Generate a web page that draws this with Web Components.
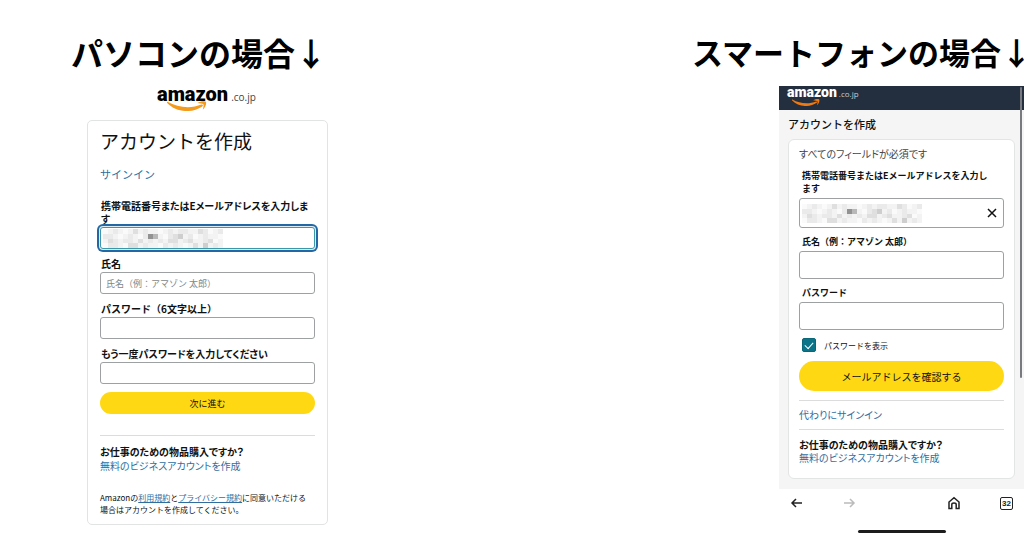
<!DOCTYPE html>
<html lang="ja">
<head>
<meta charset="utf-8">
<title>アカウントを作成</title>
<style>
    body {
        margin: 0;
        background: #fff;
        color: #0f1111;
        font-family: "Noto Sans CJK JP", "Noto Sans", sans-serif;
        font-size: 10px;
        font-feature-settings: "palt";
        overflow: hidden;
    }
</style>
</head>
<body>
<compare-page>
    <device-column slot="pc" heading="パソコンの場合↓"><desktop-signup></desktop-signup></device-column>
    <device-column slot="phone" heading="スマートフォンの場合↓" long><phone-signup></phone-signup></device-column>
</compare-page>

<script>
/**
 * Attach an open shadow root holding the given markup.
 * @param {HTMLElement} el
 * @param {String} html
 */
const render = (el, html) => {
    const template = document.createElement('template');
    template.innerHTML = html;
    el.attachShadow({ mode: 'open' }).appendChild(template.content.cloneNode(true));
};

// Styles shared by both forms.
const formStyles = `
    * { box-sizing: border-box; }
    h2, p { margin: 0; }
    a { color: #2f6f9f; text-decoration: none; }
    hr { height: 1px; border: 0; background: #dcdcdc; margin: 0; }
    button {
        display: block;
        width: 100%;
        border: 0;
        padding: 0;
        border-radius: 15px;
        background: #ffd814;
        color: #0f1111;
        font: inherit;
        font-feature-settings: normal;
    }
`;

class ComparePage extends HTMLElement {
    constructor () {
        super();
        render(this, `
<style>
    :host { display: flex; justify-content: space-between; min-height: 100vh; overflow: hidden; }
    .pc { flex: none; padding-left: 71px; }
    .phone { flex: none; display: flex; }
</style>
<section class="pc"><slot name="pc"></slot></section>
<section class="phone"><slot name="phone"></slot></section>
`);
    }
}

class DeviceColumn extends HTMLElement {
    constructor () {
        super();
        render(this, `
<style>
    :host { display: flex; flex-direction: column; width: 332px; }
    h1 {
        margin: 0;
        padding-top: 30px;
        height: 55px;
        font-size: 32px;
        line-height: 44px;
        font-weight: 700;
        color: #000;
        white-space: nowrap;
        font-feature-settings: normal;
    }
    :host([long]) h1 { font-size: 31px; }
</style>
<h1></h1>
<slot></slot>
`);
        this.shadowRoot.querySelector('h1').textContent = this.getAttribute('heading');
    }
}

class StoreLogo extends HTMLElement {
    constructor () {
        super();
        render(this, `
<style>
    :host {
        display: grid;
        grid-template-columns: max-content max-content;
        justify-content: start;
        align-content: start;
        column-gap: 3px;
        align-items: baseline;
        color: #000;
        font-family: Roboto, sans-serif;
    }
    b { font-size: var(--logo-size, 20px); line-height: var(--logo-line, 18px); font-weight: 900; }
    span { font-family: "Open Sans", sans-serif; font-size: var(--domain-size, 10px); line-height: 12px; color: var(--domain-color, #444); }
    svg { display: block; width: var(--smile-width, 40px); height: auto; margin: var(--smile-margin, -2px 0 0 10px); color: var(--smile, #f29b1d); }
</style>
<b>amazon</b><span>.co.jp</span>
<svg viewBox="0 0 40 10" aria-hidden="true">
    <path d="M0.5 0.800 C11 6.800 24 7.800 34.5 3.600 C35.8 3.200 36.5 4.500 35.3 5.400 C25 12.500 9 11.500 0.200 2 C-0.200 1.300 0 0.600 0.500 0.800Z" fill="currentColor"/>
    <path d="M30.500 2 C33.500 -0.200 37.800 -0.200 38.800 0.800 C39.900 2 38.300 7 35.800 8.800 C36.300 6.500 37 4 36.200 3.100 C35.500 2.400 33 2.300 30.500 2Z" fill="currentColor"/>
</svg>
`);
    }
}

/**
 * Pixelated strip laid over a field to hide its value.
 */
class MosaicStrip extends HTMLElement {
    constructor () {
        super();
        const rows = [
            '012101312110121221132012',
            '221012102651023412012110',
            '132122131212133123112301',
            '022103312110212101314121'
        ];
        const shades = ['#fafafa', '#f3f3f3', '#eaeaea', '#dfdfdf', '#cecece', '#b8b8b8', '#929292'];
        let rects = '';
        rows.forEach((row, y) => {
            [...row].forEach((level, x) => {
                rects += `<rect x="${x * 5}" y="${y * 5}" width="5" height="5" fill="${shades[level]}"/>`;
            });
        });
        render(this, `
<style>
    :host { display: block; width: 120px; height: 19px; pointer-events: none; }
    svg { display: block; width: 100%; height: 100%; }
</style>
<svg viewBox="0 0 120 20" preserveAspectRatio="none" shape-rendering="crispEdges" aria-hidden="true">${rects}</svg>
`);
    }
}

/**
 * Label and input pair.
 * The slot takes whatever lies over the input.
 * Add the tight attribute to set the label with proportional kana.
 */
class TextField extends HTMLElement {
    constructor () {
        super();
        render(this, `
<style>
    :host { display: block; margin-top: var(--field-space, 8px); font-feature-settings: normal; }
    :host([tight]) { font-feature-settings: "palt"; }
    label { display: block; padding-left: var(--label-indent, 1px); font-size: var(--label-size, 10px); line-height: 13px; font-weight: 700; white-space: pre-line; }
    .box { position: relative; margin-top: var(--label-gap, 2px); }
    input {
        display: block;
        box-sizing: border-box;
        width: 100%;
        height: var(--field-height, 22px);
        padding: 0 5px;
        border: 1px solid #9da1a1;
        border-radius: 3px;
        background: #fff;
        color: #0f1111;
        font: inherit;
        font-size: 9px;
        outline: 0;
    }
    input::placeholder { color: #838888; opacity: 1; }
    :host([active]) input { border-color: #3c97a8; box-shadow: 0 0 0 1px #dcebf2, 0 0 0 3px #2368a5; }
    .over {
        position: absolute;
        inset: 0;
        display: flex;
        align-items: center;
        justify-content: space-between;
        padding: 0 7px 0 3px;
    }
    .over:not(.filled) { display: none; }
</style>
<label for="field"></label>
<div class="box">
    <input id="field">
    <div class="over"><slot></slot></div>
</div>
`);
        const input = this.shadowRoot.querySelector('input');
        this.shadowRoot.querySelector('label').textContent = this.getAttribute('label').replace('|', '\n');
        input.type = this.getAttribute('type') || 'text';
        input.placeholder = this.getAttribute('placeholder') || '';
        this.shadowRoot.querySelector('.over').classList.toggle('filled', this.childElementCount > 0);
    }
}

class DesktopSignup extends HTMLElement {
    constructor () {
        super();
        render(this, `
<style>
    ${formStyles}
    :host { display: block; width: 241px; margin-left: 16px; }
    store-logo { margin-left: 70px; height: 35px; }
    .card { padding: 7px 12px 8px; border: 1px solid #e2e4e4; border-radius: 5px; }
    h2 { font-size: 19px; line-height: 26px; font-weight: 400; white-space: nowrap; font-feature-settings: normal; }
    .signin { display: block; margin: 12px 0 17px; font-size: 11px; line-height: 16px; font-feature-settings: normal; }
    button { margin-top: 8px; height: 22px; font-size: 9px; }
    hr { margin: 21px 0 9px; }
    .business { line-height: 14px; }
    .business b, .business a { display: block; }
    .terms { margin-top: 19px; font-size: 8px; line-height: 12px; white-space: nowrap; font-feature-settings: normal; }
    .terms a { text-decoration: underline; }
</style>
<store-logo></store-logo>
<form class="card">
    <h2>アカウントを作成</h2>
    <a class="signin" href="#signin">サインイン</a>
    <text-field active tight label="携帯電話番号またはEメールアドレスを入力しま|す"><mosaic-strip></mosaic-strip></text-field>
    <text-field label="氏名" placeholder="氏名（例：アマゾン 太郎）"></text-field>
    <text-field label="パスワード（6文字以上）" type="password"></text-field>
    <text-field tight label="もう一度パスワードを入力してください" type="password"></text-field>
    <button type="button">次に進む</button>
    <hr>
    <p class="business"><b>お仕事のための物品購入ですか？</b><a href="#business">無料のビジネスアカウントを作成</a></p>
    <p class="terms">Amazonの<a href="#terms">利用規約</a>と<a href="#privacy">プライバシー規約</a>に同意いただける<br>場合はアカウントを作成してください。</p>
</form>
`);
    }
}

class BrowserBar extends HTMLElement {
    constructor () {
        super();
        render(this, `
<style>
    :host { display: block; background: #fff; }
    nav { display: flex; align-items: center; height: 28px; padding: 0 11px; }
    button { width: 14px; height: 14px; padding: 0; border: 0; background: none; color: #222; }
    button:nth-child(2) { margin: 0 auto 0 38px; color: #bbb; }
    button:nth-child(3) { margin-right: 39px; }
    .tabs { border: 1px solid #222; border-radius: 2px; width: 13px; height: 13px; font: 700 8px/11px "Liberation Sans", sans-serif; }
    svg { display: block; width: 100%; height: 100%; fill: none; stroke: currentColor; stroke-width: 1.5; }
    .home-line { width: 88px; height: 3px; margin: 13px auto 0; border-radius: 2px; background: #1d1d1d; }
</style>
<nav>
    <button type="button" aria-label="戻る"><svg viewBox="0 0 14 14"><path d="M12 7H2.500M6 3L2 7l4 4"/></svg></button>
    <button type="button" aria-label="進む"><svg viewBox="0 0 14 14"><path d="M2 7h9.500M8 3l4 4-4 4"/></svg></button>
    <button type="button" aria-label="ホーム"><svg viewBox="0 0 14 14"><path d="M2 12.500V6L7 1.700 12 6v6.500H9.200V8.500Q9.200 7 7 7T4.800 8.500v4Z"/></svg></button>
    <button type="button" class="tabs">32</button>
</nav>
<div class="home-line"></div>
`);
    }
}

class PhoneSignup extends HTMLElement {
    constructor () {
        super();
        render(this, `
<style>
    ${formStyles}
    :host { position: relative; display: block; width: 245px; margin: 1px 0 0 auto; }
    header { height: 24px; padding-left: 8px; background: #232f3e; }
    store-logo {
        --logo-size: 14px;
        --logo-line: 12px;
        --domain-size: 8px;
        --domain-color: #c8ccd1;
        --smile: #ef7a13;
        --smile-width: 28px;
        --smile-margin: -1px 0 0 5px;
        column-gap: 2px;
        color: #fff;
    }
    .page { padding: 6px 9px 10px; background: #f5f5f5; }
    h2 { font-size: 11px; line-height: 16px; font-weight: 500; font-feature-settings: normal; }
    .card { margin-top: 7px; padding: 7px 10px 14px; border: 1px solid #e3e5e5; border-radius: 6px; background: #fff; }
    .note { line-height: 14px; color: #444; }
    text-field { --field-space: 7px; --label-gap: 3px; --label-indent: 3px; --label-size: 9px; --field-height: 28px; }
    text-field.first { --field-space: 8px; --field-height: 30px; }
    .clear { width: 10px; height: 10px; background: none; }
    .clear svg { display: block; stroke: #111; stroke-width: 1.5; }
    .show { display: flex; align-items: center; gap: 8px; height: 14px; margin: 8px 0 9px 3px; font-size: 8px; font-feature-settings: normal; }
    .show input {
        appearance: none;
        width: 14px;
        height: 14px;
        margin: 0;
        border: 1px solid #0b6678;
        border-radius: 2px;
        background: #0c7488;
    }
    .show input::before { content: ""; display: block; width: 7px; height: 4px; margin: 3px auto 0; border: solid transparent; border-width: 0 0 1px 1px; transform: rotate(-48deg); }
    .show input:checked::before { border-color: #fff; }
    .confirm { height: 30px; margin-bottom: 9px; }
    .signin { display: block; margin: 7px 0; line-height: 14px; }
    .business { margin-top: 8px; line-height: 13px; }
    .business b, .business a { display: block; }
    .scroll { position: absolute; top: 1px; right: 2px; width: 2px; height: 291px; border-radius: 1px; background: #777b80; }
</style>
<header><store-logo></store-logo></header>
<div class="page">
    <h2>アカウントを作成</h2>
    <form class="card">
        <p class="note">すべてのフィールドが必須です</p>
        <text-field class="first" label="携帯電話番号またはEメールアドレスを入力し|ます">
            <mosaic-strip></mosaic-strip>
            <button class="clear" type="button" aria-label="消去"><svg viewBox="0 0 10 10"><path d="M1 1l8 8M9 1L1 9"/></svg></button>
        </text-field>
        <text-field label="氏名（例：アマゾン 太郎）"></text-field>
        <text-field label="パスワード" type="password"></text-field>
        <div class="show"><input id="show" type="checkbox" checked><label for="show">パスワードを表示</label></div>
        <button class="confirm" type="button">メールアドレスを確認する</button>
        <hr>
        <a class="signin" href="#signin">代わりにサインイン</a>
        <hr>
        <p class="business"><b>お仕事のための物品購入ですか？</b><a href="#business">無料のビジネスアカウントを作成</a></p>
    </form>
</div>
<browser-bar></browser-bar>
<div class="scroll"></div>
`);
    }
}

window.customElements.define('store-logo', StoreLogo);
window.customElements.define('mosaic-strip', MosaicStrip);
window.customElements.define('text-field', TextField);
window.customElements.define('browser-bar', BrowserBar);
window.customElements.define('desktop-signup', DesktopSignup);
window.customElements.define('phone-signup', PhoneSignup);
window.customElements.define('device-column', DeviceColumn);
window.customElements.define('compare-page', ComparePage);
</script>
</body>
</html>
